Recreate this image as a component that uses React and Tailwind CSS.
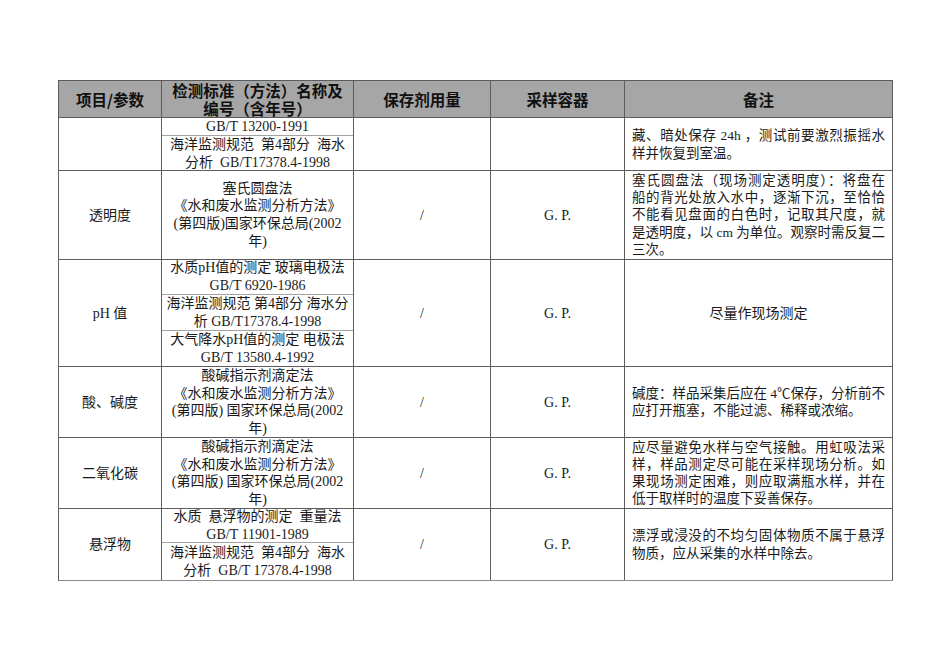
const SERIF = { fontFamily: '"Liberation Serif", "Noto Sans CJK SC", serif' };
const CJK = { fontFamily: '"Noto Sans CJK SC", sans-serif' };

const STD_BOOK = ['酸碱指示剂滴定法', '《水和废水监测分析方法》', '(第四版) 国家环保总局(2002', '年)'];

const ROWS = [
  {
    item: '',
    h: 'h-[53px]',
    std: [
      { h: 'h-[18px]', lines: ['GB/T 13200-1991'] },
      { h: 'flex-1', lines: ['海洋监测规范  第4部分  海水', '分析  GB/T17378.4-1998'] },
    ],
    dose: '',
    vessel: '',
    note: ['藏、暗处保存 24h ，测试前要激烈振摇水', '样并恢复到室温。'],
  },
  {
    item: '透明度',
    h: 'h-[89px]',
    std: [{ h: 'flex-1', lines: ['塞氏圆盘法', '《水和废水监测分析方法》', '(第四版)国家环保总局(2002', '年)'] }],
    dose: '/',
    vessel: 'G. P.',
    note: [
      '塞氏圆盘法（现场测定透明度）：将盘在',
      '船的背光处放入水中，逐渐下沉，至恰恰',
      '不能看见盘面的白色时，记取其尺度，就',
      '是透明度，以 cm 为单位。观察时需反复二',
      '三次。',
    ],
  },
  {
    item: 'pH 值',
    h: 'h-[107px]',
    std: [
      { h: 'h-[35px]', lines: ['水质pH值的测定 玻璃电极法', 'GB/T 6920-1986'] },
      { h: 'h-[36px]', lines: ['海洋监测规范 第4部分 海水分', '析 GB/T17378.4-1998'] },
      { h: 'flex-1', lines: ['大气降水pH值的测定 电极法', 'GB/T 13580.4-1992'] },
    ],
    dose: '/',
    vessel: 'G. P.',
    center: '尽量作现场测定',
  },
  {
    item: '酸、碱度',
    h: 'h-[71px]',
    std: [{ h: 'flex-1', lines: STD_BOOK }],
    dose: '/',
    vessel: 'G. P.',
    note: ['碱度：样品采集后应在 4℃保存，分析前不', '应打开瓶塞，不能过滤、稀释或浓缩。'],
  },
  {
    item: '二氧化碳',
    h: 'h-[71px]',
    std: [{ h: 'flex-1', lines: STD_BOOK }],
    dose: '/',
    vessel: 'G. P.',
    note: [
      '应尽量避免水样与空气接触。用虹吸法采',
      '样，样品测定尽可能在采样现场分析。如',
      '果现场测定困难，则应取满瓶水样，并在',
      '低于取样时的温度下妥善保存。',
    ],
  },
  {
    item: '悬浮物',
    h: 'h-[72px]',
    std: [
      { h: 'h-[34px]', lines: ['水质  悬浮物的测定  重量法', 'GB/T 11901-1989'] },
      { h: 'flex-1', lines: ['海洋监测规范  第4部分  海水', '分析  GB/T 17378.4-1998'] },
    ],
    dose: '/',
    vessel: 'G. P.',
    note: ['漂浮或浸没的不均匀固体物质不属于悬浮', '物质，应从采集的水样中除去。'],
  },
];

const GRID = 'grid grid-cols-[103px_192px_137px_134px_268px]';
const CELL = 'border-r border-[#5c5c5c] flex items-center justify-center text-center';

function Note({ lines }) {
  return (
    <div className="w-full px-[7px] text-[13.5px] leading-[17.3px]">
      {lines.map((l, i) => (
        <div
          key={i}
          className={
            'whitespace-pre ' +
            (i < lines.length - 1 ? 'text-justify [text-align-last:justify]' : 'text-left')
          }
        >
          {l}
        </div>
      ))}
    </div>
  );
}

export default function App() {
  return (
    <div lang="zh-CN" className="w-[950px] h-[672px] bg-white text-[#1a1a1a]" style={SERIF}>
      <div className="pt-[80px] pl-[58px]">
        <div className="w-[835px] border-l border-t border-[#5c5c5c]">
          {/* header */}
          <div
            className={GRID + ' h-[37px] bg-[#a6a6a6] border-b border-[#5c5c5c] font-bold text-[15.5px] leading-[18px] text-[#111]'}
            style={CJK}
          >
            <div className={CELL}>项目/参数</div>
            <div className={CELL + ' flex-col'}>
              <div>检测标准（方法）名称及</div>
              <div>编号（含年号）</div>
            </div>
            <div className={CELL}>保存剂用量</div>
            <div className={CELL}>采样容器</div>
            <div className={CELL}>备注</div>
          </div>

          {ROWS.map((r, i) => (
            <div
              key={i}
              className={
                GRID +
                ' ' +
                r.h +
                ' border-b text-[14px] ' +
                (i === ROWS.length - 1 ? 'border-[#8c8c8c]' : 'border-[#5c5c5c]')
              }
            >
              <div className={CELL + ' whitespace-pre'}>{r.item}</div>
              <div className="border-r border-[#5c5c5c] flex flex-col">
                {r.std.map((s, j) => (
                  <div
                    key={j}
                    className={
                      s.h +
                      ' flex flex-col items-center justify-center text-center leading-[17.6px] whitespace-pre ' +
                      (j < r.std.length - 1 ? 'border-b border-[#a3a3a3]' : '')
                    }
                  >
                    {s.lines.map((l, k) => (
                      <div key={k}>{l}</div>
                    ))}
                  </div>
                ))}
              </div>
              <div className={CELL}>{r.dose}</div>
              <div className={CELL}>{r.vessel}</div>
              <div className={CELL}>{r.center ? r.center : <Note lines={r.note} />}</div>
            </div>
          ))}
        </div>
      </div>
    </div>
  );
}
